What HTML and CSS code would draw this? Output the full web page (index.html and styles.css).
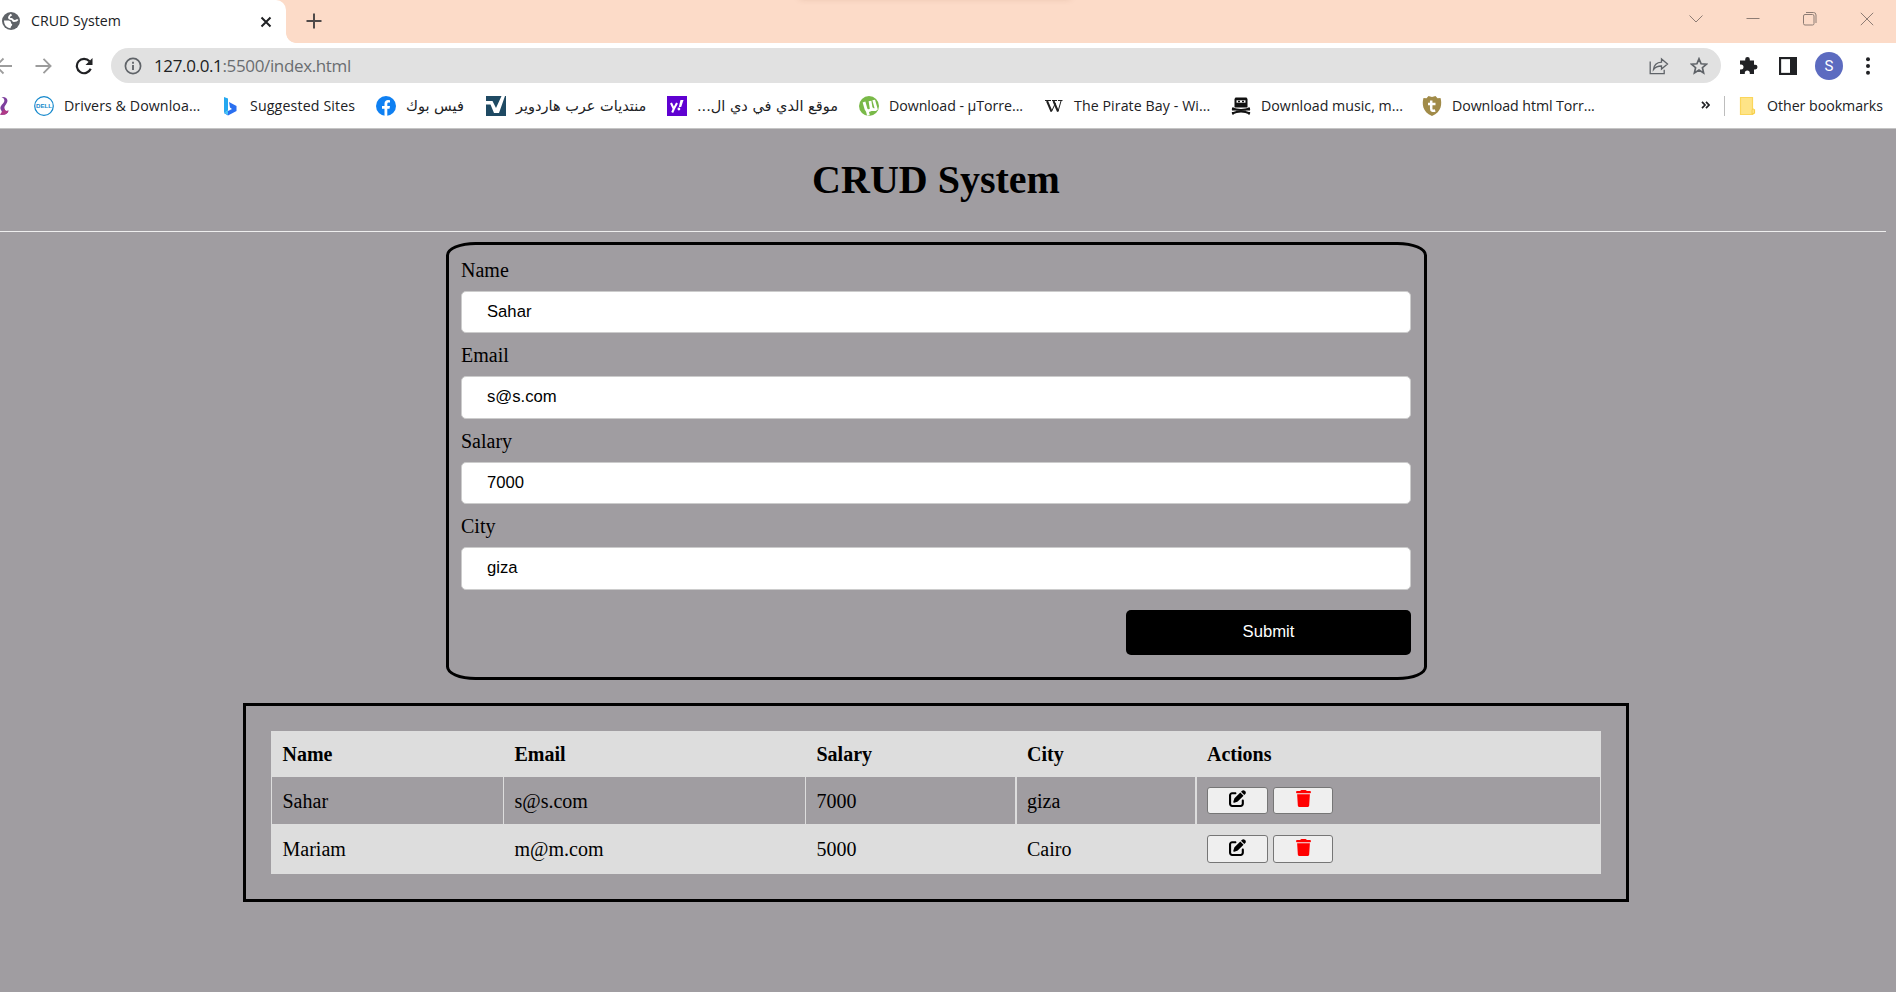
FILE: index.html
```html
<!DOCTYPE html>
<html lang="en">
<head>
<meta charset="utf-8">
<title>CRUD System</title>
<link rel="stylesheet" href="styles.css">
</head>
<body>
<header class="chrome">
  <div class="tabstrip">
    <div class="tab">
      <svg class="tab-icon" width="18" height="18" viewBox="0 0 18 18"><circle cx="9" cy="9" r="9" fill="#5f6368"/><path d="M9.500 2.500c-1.500 1.300-2.500 1.500-2.500 3s1 1.500 2.500 1.500 1 2 2.500 2 3-.5 3.800-1.500" fill="none" stroke="#fff" stroke-width="1.900"/><path d="M2 8.500h4.500c1.500 0 2.500 1 2.500 2.200s1.200.8 1.200 2-1.500 1.200-1.700 3.500C4.500 16 2 13 2 8.500z" fill="#fff"/></svg>
      <span class="tab-title">CRUD System</span>
      <svg class="tab-close" width="12" height="12" viewBox="0 0 12 12"><path d="M1.500 1.500l9 9M10.500 1.500l-9 9" stroke="#202124" stroke-width="2"/></svg>
    </div>
    <div class="tab-foot"></div>
    <svg class="new-tab" width="16" height="16" viewBox="0 0 16 16"><path d="M8 .5v15M.5 8h15" stroke="#4f4a49" stroke-width="2"/></svg>
    <div class="top-shade"></div>
    <div class="window-buttons">
      <svg width="14" height="14" viewBox="0 0 14 14"><path d="M.5 3.500l6.500 6.500L13.500 3.500"/></svg>
      <svg width="14" height="14" viewBox="0 0 14 14"><path d="M.5 6.500h13"/></svg>
      <svg width="14" height="14" viewBox="0 0 14 14"><rect x=".5" y="2.500" width="10.500" height="10.500" rx="1.500"/><path d="M3 .5h7.500q2.500 0 2.500 2.500v8"/></svg>
      <svg width="14" height="14" viewBox="0 0 14 14"><path d="M.8 .8l12.400 12.400M13.200 .8L.8 13.200"/></svg>
    </div>
  </div>
  <div class="toolbar">
    <svg class="nav-back" width="12" height="18" viewBox="0 0 12 18"><path d="M12 9H-3M3.500 1.500L-4 9l7.500 7.500" fill="none" stroke="#9c9c9c" stroke-width="1.800"/></svg>
    <svg class="nav-forward" width="17" height="18" viewBox="0 0 17 18"><path d="M.5 9H15M8.500 1.800L15.600 9l-7.100 7.200" fill="none" stroke="#9c9c9c" stroke-width="1.800"/></svg>
    <svg class="nav-reload" width="18" height="18" viewBox="0 0 18 18"><path d="M15.700 11.800A7.200 7.200 0 1 1 14.500 4.300" fill="none" stroke="#202124" stroke-width="2.200"/><path d="M17.500 1v7h-7z" fill="#202124"/></svg>
    <div class="omnibox">
      <svg class="info" width="18" height="18" viewBox="0 0 18 18"><circle cx="9" cy="9" r="7.600" fill="none" stroke="#5f6368" stroke-width="1.700"/><path d="M9 8v5M9 4.700v2" stroke="#5f6368" stroke-width="1.800"/></svg>
      <span class="url">127.0.0.1<span class="url-rest">:5500/index.html</span></span>
      <svg class="share" width="20" height="18" viewBox="0 0 20 18"><path d="M1.200 4.500v12.200h14v-4M4.500 12.500c.5-5 3-7 8-7.300V2l6 5-6 5V9c-4 0-6.200 1-8 3.500z" fill="none" stroke="#5f6368" stroke-width="1.300"/></svg>
      <svg class="star" width="18" height="18" viewBox="0 0 18 18"><path d="M9 1.800l2.100 5 5.300.4-4 3.500 1.200 5.200L9 13.100l-4.600 2.800 1.200-5.200-4-3.500 5.300-.4z" fill="none" stroke="#5f6368" stroke-width="1.700"/></svg>
    </div>
    <svg class="ext" width="19" height="19" viewBox="0 0 19 19"><path d="M2 4.500h4.200V3.200a2.300 2.300 0 0 1 4.600 0v1.300H15v4.300h1.200a2.300 2.300 0 0 1 0 4.600H15V18h-4.200v-1a2.500 2.500 0 0 0-5 0v1H1v-4.500h1a2.500 2.500 0 0 0 0-5H1V4.500z" fill="#202124"/></svg>
    <svg class="panel" width="18" height="18" viewBox="0 0 18 18"><rect x="1" y="1" width="16" height="16" fill="#fff" stroke="#202124" stroke-width="2.300"/><path d="M11 0h7v18h-7z" fill="#202124"/></svg>
    <div class="avatar">S</div>
    <svg class="menu" width="4" height="18" viewBox="0 0 4 18" fill="#202124"><circle cx="2" cy="2.300" r="2"/><circle cx="2" cy="9" r="2"/><circle cx="2" cy="15.700" r="2"/></svg>
  </div>
  <nav class="bookmarks">
    <div class="bm bm-first"><svg width="10" height="20" viewBox="0 0 10 20"><path d="M1.500 1C6 .5 8.500 3 7 6.500S4 10 4.500 12.500s2 3 4 2C8 17.500 5.500 19.500 0 18.500c2-1 2.500-2 1-4.500S1 9.500 3 7.500 5 2.500 1.500 1z" fill="#7d3f9d"/><path d="M4.500 12.500c.5 2.500 2 3 4 2C8 17.500 5.500 19.500 0 18.500z" fill="#b03a86"/></svg></div>
    <div class="bm bm-dell"><svg width="20" height="20" viewBox="0 0 20 20"><circle cx="10" cy="10" r="9.300" fill="#fff" stroke="#1488cc" stroke-width="1.200"/><text x="10" y="12.200" text-anchor="middle" textLength="16" lengthAdjust="spacingAndGlyphs" class="dell-text">DELL</text></svg><span class="bm-text">Drivers &amp; Downloa...</span></div>
    <div class="bm bm-bing"><svg width="20" height="20" viewBox="0 0 20 20"><path d="M2 1l4 1.500v12L2 17z" fill="#25a8f0"/><path d="M7 6l7.500 4v5L6 19.500 2 17l8-4-2-1.500z" fill="#2a6ff0"/><path d="M6 14.500V19l-4-2z" fill="#47c5f4"/></svg><span class="bm-text">Suggested Sites</span></div>
    <div class="bm bm-fb"><svg width="20" height="20" viewBox="0 0 20 20"><circle cx="10" cy="10" r="10" fill="#0f80f2"/><path d="M8.500 20v-7.200H6V10h2.500V7.800C8.500 5.200 10 4 12 4l2 .2v2.400h-1.200c-1.200 0-1.500.7-1.500 1.500V10H14l-.5 2.800h-2.200V20z" fill="#fff"/></svg><span class="bm-text ar" dir="rtl">فيس بوك</span></div>
    <div class="bm bm-hw"><svg width="20" height="20" viewBox="0 0 20 20"><path d="M0 0h20v20H0z" fill="#1f4a63"/><path d="M0 5h6.500l3.500 7L15.500 0h3.500l-6 17H8L4.500 8.500H0z" fill="#fff"/></svg><span class="bm-text ar" dir="rtl">منتديات عرب هاردوير</span></div>
    <div class="bm bm-yahoo"><svg width="20" height="20" viewBox="0 0 20 20"><path d="M0 0h20v20H0z" fill="#5f01d1"/><path d="M4 7l2.800 6L10 7M6.800 13l-1.600 3.500" fill="none" stroke="#fff" stroke-width="2.100"/><path d="M13.500 4h3l-2.300 7h-2.400z" fill="#fff"/><circle cx="11.900" cy="13" r="1.400" fill="#fff"/></svg><span class="bm-text ar" dir="rtl">موقع الدي في دي ال...</span></div>
    <div class="bm bm-ut"><svg width="20" height="20" viewBox="0 0 20 20"><circle cx="10" cy="10" r="10" fill="#79b948"/><path d="M5 6l2 7c.7 2.500 5 2 5.200-.5L11 5M12.200 12c1 2 3.500 2 5 1l-2.500-9M8 14l1.500 5.500" fill="none" stroke="#fff" stroke-width="2.800"/></svg><span class="bm-text">Download - µTorre...</span></div>
    <div class="bm bm-wiki"><svg width="20" height="20" viewBox="0 0 20 20"><path d="M1 4.500h6M8 4.500h5M14 4.500h4.500" stroke="#222" stroke-width="1"/><path d="M3 5l4.500 10.500M9.500 5L14 15.500" stroke="#222" stroke-width="2"/><path d="M7.500 15.500L11.500 7M14 15.500L17 5" stroke="#222" stroke-width="1"/></svg><span class="bm-text">The Pirate Bay - Wi...</span></div>
    <div class="bm bm-music"><svg width="20" height="20" viewBox="0 0 20 20"><path d="M4.500 1.500h11l1 1.500v8.500h-13V3z" fill="#111"/><path d="M5.500 5.500h9" stroke="#fff" stroke-width="2.400"/><path d="M7 5.500h2M11 5.500h2" stroke="#111" stroke-width="1.300"/><path d="M1 12.500q9 3 18 0M1 17.500q9-4 18 0M2 11.500v3M18 11.500v3M2 16v2.500M18 16v2.500" fill="none" stroke="#111" stroke-width="2"/></svg><span class="bm-text">Download music, m...</span></div>
    <div class="bm bm-torr"><svg width="20" height="20" viewBox="0 0 20 20"><path d="M1.500 2l3 .2L6.500 0 10 1l3.500-1 2 2.200 3-.2c1.500 5 1.500 14-8.500 18C0 16 0 7 1.500 2z" fill="#a18b49"/><path d="M9.200 4.500v8c0 2.200 1.500 2.700 4 2M6 8h7.500" fill="none" stroke="#fff" stroke-width="2.500"/></svg><span class="bm-text">Download html Torr...</span></div>
    <svg class="more" width="9" height="8" viewBox="0 0 9 8"><path d="M1 .8L4 4 1 7.200M5 .8L8 4 5 7.200" fill="none" stroke="#202124" stroke-width="1.700"/></svg>
    <div class="bm-sep"></div>
    <div class="bm bm-other"><svg width="17" height="20" viewBox="0 0 17 20"><path d="M1.500 1.500h12v12l2 .5v3l-2 1.500h-12z" fill="#fee487" stroke="#fbd65b" stroke-width="1.200"/><path d="M13 18v-3.500q0-1.500 1.300-1.500t1.200 2v2z" fill="#fee487" stroke="#f5cd45" stroke-width=".9"/></svg><span class="bm-text">Other bookmarks</span></div>
  </nav>
</header>
<main class="page">
  <h1 class="heading">CRUD System</h1>
  <form class="form">
    <div class="field first"><label class="label" for="n">Name</label><input class="input" id="n" value="Sahar"></div>
    <div class="field"><label class="label" for="e">Email</label><input class="input tall" id="e" value="s@s.com"></div>
    <div class="field"><label class="label" for="s">Salary</label><input class="input" id="s" value="7000"></div>
    <div class="field"><label class="label" for="c">City</label><input class="input tall" id="c" value="giza"></div>
    <button class="submit" type="button">Submit</button>
  </form>
  <section class="list">
    <table class="table">
      <colgroup><col class="c-name"><col class="c-email"><col class="c-salary"><col class="c-city"><col></colgroup>
      <tr class="head"><th>Name</th><th>Email</th><th>Salary</th><th>City</th><th>Actions</th></tr>
      <tr class="odd"><td>Sahar</td><td>s@s.com</td><td>7000</td><td>giza</td><td><div class="actions">
        <button class="act edit" type="button"><svg width="17" height="17" viewBox="0 0 512 512"><use href="#pen"/></svg></button>
        <button class="act del" type="button"><svg width="15" height="17" viewBox="0 0 448 512"><use href="#trash"/></svg></button></div></td></tr>
      <tr class="even"><td>Mariam</td><td>m@m.com</td><td>5000</td><td>Cairo</td><td><div class="actions">
        <button class="act edit" type="button"><svg width="17" height="17" viewBox="0 0 512 512"><use href="#pen"/></svg></button>
        <button class="act del" type="button"><svg width="15" height="17" viewBox="0 0 448 512"><use href="#trash"/></svg></button></div></td></tr>
    </table>
  </section>
</main>
<svg class="defs" width="0" height="0">
  <defs>
    <path id="pen" d="M471.600 21.700c-21.900-21.900-57.300-21.900-79.200 0L362.300 51.700l97.900 97.900 30.100-30.100c21.900-21.900 21.900-57.300 0-79.200L471.600 21.700zm-299.200 220c-6.100 6.100-10.800 13.600-13.500 21.900l-29.600 88.800c-2.900 8.600-.6 18.100 5.800 24.600s15.900 8.700 24.600 5.800l88.800-29.600c8.200-2.700 15.700-7.400 21.900-13.500L437.700 172.300 339.700 74.300 172.400 241.700zM96 64C43 64 0 107 0 160V416c0 53 43 96 96 96H352c53 0 96-43 96-96V320c0-17.700-14.300-32-32-32s-32 14.300-32 32v96c0 17.700-14.300 32-32 32H96c-17.700 0-32-14.300-32-32V160c0-17.700 14.300-32 32-32h96c17.700 0 32-14.300 32-32s-14.300-32-32-32H96z"/>
    <path id="trash" d="M135.200 17.700L128 32H32C14.300 32 0 46.300 0 64S14.300 96 32 96H416c17.700 0 32-14.300 32-32s-14.300-32-32-32H320l-7.200-14.300C307.400 6.800 296.300 0 284.200 0H163.800c-12.100 0-23.200 6.800-28.600 17.700zM416 128H32L53.200 467c1.600 25.300 22.600 45 47.900 45H346.900c25.300 0 46.300-19.700 47.900-45L416 128z"/>
  </defs>
</svg>
</body>
</html>
```
FILE: styles.css
```css
* { box-sizing: border-box; }
body { margin: 0; width: 1896px; height: 992px; overflow: hidden; background: #a09da1; font-family: "Liberation Serif", serif; color: #000; display: flex; flex-direction: column; }
svg { display: block; flex: none; }
.defs { position: absolute; }

.chrome { height: 129px; flex: none; background: #fff; border-bottom: 1px solid #c5c5c5; font-family: "Open Sans", "DejaVu Sans", sans-serif; color: #202124; }
.tabstrip { height: 43px; background: #fcdbc8; display: flex; position: relative; overflow: hidden; }
.tab { width: 286px; height: 43px; background: #fff; border-radius: 0 10px 0 0; display: flex; align-items: center; padding-left: 2px; }
.tab-title { width: 229px; margin-left: 11px; font-size: 14.2px; letter-spacing: 0; white-space: nowrap; line-height: 20px; padding-bottom: 1px; }
.tab-icon { margin-top: -1px; }
.tab-foot { width: 10px; height: 10px; margin-top: 33px; background: radial-gradient(circle at 100% 0, #fcdbc8 9.500px, #fff 10.200px); }
.new-tab { margin: 13px 0 0 9.500px; }
.top-shade { position: absolute; left: 800px; top: -10px; width: 270px; height: 8px; box-shadow: 0 0 7px rgba(120, 60, 30, .22); }
.window-buttons { margin: 12px 22px 0 auto; display: flex; gap: 43px; }
.window-buttons svg { fill: none; stroke: #8d7c74; stroke-width: 1; }

.toolbar { height: 45px; display: flex; align-items: center; }
.nav-forward { margin-left: 23px; }
.nav-reload { margin-left: 23px; }
.omnibox { width: 1610px; height: 35px; margin-left: 18px; border-radius: 18px; background: #e1e1e1; display: flex; align-items: center; padding: 0 13px; }
.url { margin-left: 12px; margin-right: auto; font-size: 17px; letter-spacing: -.36px; white-space: nowrap; }
.url-rest { color: #6a6d70; }
.star { margin-left: 21px; }
.ext { margin-left: 18px; }
.panel { margin-left: 21px; }
.avatar { width: 28px; height: 28px; margin-left: 18px; border-radius: 50%; background: #5c6bc0; color: #fff; font: 15px/28px Roboto, sans-serif; text-align: center; }
.menu { margin-left: 23px; }

.bookmarks { height: 36px; display: flex; align-items: center; }
.bm { display: flex; align-items: center; gap: 10px; flex: none; white-space: nowrap; }
.bm-text { font-size: 14.2px; line-height: 20px; letter-spacing: .08px; }
.ar { font-family: "DejaVu Sans", sans-serif; font-size: 14.500px; letter-spacing: 0; }
.dell-text { font: bold 6px "Liberation Sans", sans-serif; fill: #1488cc; }
.bm-first { width: 34px; }
.bm-dell { width: 188px; }
.bm-bing { width: 154px; }
.bm-bing .bm-text { margin-left: -2px; letter-spacing: .14px; }
.bm-fb { width: 110px; }
.bm-hw { width: 181px; }
.bm-yahoo { width: 192px; }
.bm-ut { width: 185px; }
.bm-ut .bm-text { letter-spacing: -.05px; }
.bm-wiki { width: 187px; }
.bm-music { width: 191px; }
.bm-music .bm-text { letter-spacing: .02px; }
.bm-torr { width: 279px; }
.bm-torr .bm-text { letter-spacing: -.07px; }
.more { margin-top: -2px; }
.bm-sep { width: 1px; height: 20px; background: #bdbdbd; margin: 0 14px; }
.bm-other { gap: 11px; }
.bm-other .bm-text { letter-spacing: -.04px; }

.page { flex: 1; display: flex; flex-direction: column; }
.heading { margin: 0; width: 1886px; height: 103px; padding: 28px 14px 0 0; border-bottom: 1px solid #eee; font-size: 40px; line-height: 46px; text-align: center; }
.form { width: 981px; height: 438px; margin: 10px 0 0 446px; border: 3px solid #000; border-radius: 3%; padding: 0 13px 0 12px; display: flex; flex-direction: column; }
.field { display: flex; flex-direction: column; padding-top: 10px; flex: none; }
.first { padding-top: 13px; }
.label { height: 33px; font-size: 20px; line-height: 24px; }
.input { width: 950px; height: 42px; border: 1px solid #ccc; border-radius: 5px; padding: 0 25px 1px; background: #fff; font: 16.670px "Liberation Sans", sans-serif; color: #000; flex: none; outline: 0; }
.tall { height: 43px; padding-bottom: 2px; }
.submit { align-self: flex-end; width: 285px; height: 45px; margin-top: 20px; border: 0; border-radius: 5px; background: #000; color: #fff; font: 16.670px "Liberation Sans", sans-serif; padding: 0 0 2px; }

.list { width: 1386px; height: 199px; margin: 23px 0 0 243px; border: 3px solid #000; padding: 25px; }
.table { width: 1330px; table-layout: fixed; border-spacing: 0; font-size: 20px; line-height: 23px; text-align: left; }
.c-name { width: 232px; }
.c-email { width: 302px; }
.c-salary { width: 210px; }
.c-city { width: 180px; }
.table th, .table td { padding: 0 0 0 10.500px; border-left: 1px solid #ddd; vertical-align: middle; }
.table td:last-child { border-right: 1px solid #ddd; }
.table th:nth-child(n+4), .table td:nth-child(n+4) { border-left-width: 2px; padding-left: 10px; }
.table td:not(:last-child) { padding-top: 1px; }
.head { height: 46px; background: #ddd; }
.odd { height: 47px; }
.even { height: 50px; background: #ddd; }
.actions { display: flex; gap: 5px; }
.act { height: 27px; border: 1px solid #767676; border-radius: 3px; background: #efefef; display: flex; justify-content: center; align-items: flex-start; padding: 2px 0 0; }
.even .act { height: 28px; padding-top: 3px; }
.edit { width: 61px; }
.del { width: 60px; fill: #f00; }
```
